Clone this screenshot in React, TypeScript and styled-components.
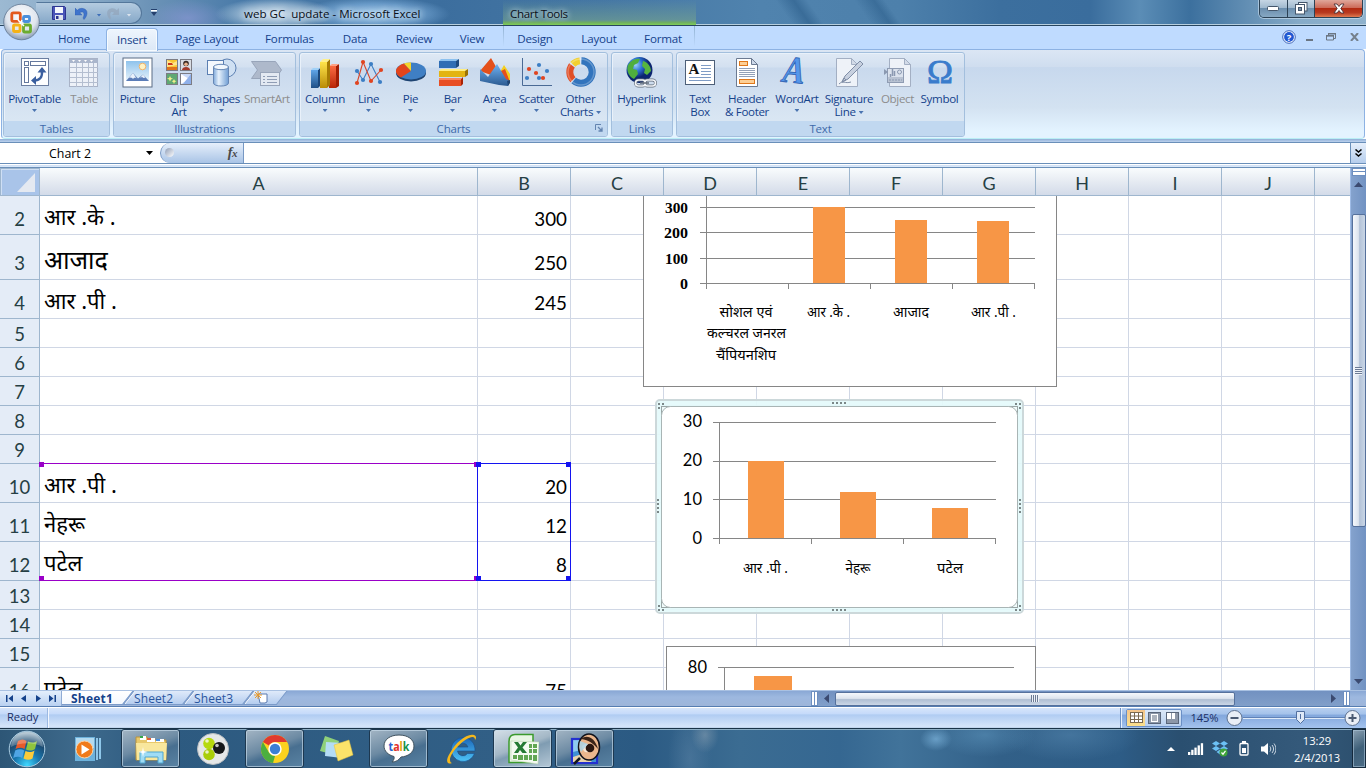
import React from "react";
import styled, { createGlobalStyle, css } from "styled-components";

const UI = `"Open Sans", "Noto Sans", sans-serif`;
const CELL = `Lato, "Noto Sans", sans-serif`;
const HINDI = `"Noto Sans Devanagari", "Noto Sans", "Lohit Devanagari", sans-serif`;

const Global = createGlobalStyle`
  * { box-sizing: border-box; }
  html, body { margin: 0; padding: 0; overflow: hidden; }
  body { font-family: ${UI}; font-size: 11.5px; }
  svg { display: block; flex: none; }
`;

const Screen = styled.div`
  width: 1366px;
  height: 768px;
  display: flex;
  flex-direction: column;
  position: relative;
  overflow: hidden;
  background: #fff;
`;

/* ---------- title bar ---------- */
const TitleBar = styled.header`
  height: 26px;
  flex: none;
  display: flex;
  align-items: flex-start;
  position: relative;
  border-bottom: 1px solid #27455f;
  box-shadow: inset 0 -1px 0 #b7cfdf;
  background:
    radial-gradient(ellipse 40px 18px at 188px 18px, rgba(135, 150, 210, .7) 0, rgba(110, 145, 195, 0) 100%),
    radial-gradient(ellipse 60px 16px at 275px 14px, rgba(215, 228, 240, .95) 0, rgba(180, 205, 225, .6) 60%, rgba(90, 140, 185, 0) 100%),
    radial-gradient(ellipse 75px 17px at 375px 14px, rgba(165, 205, 240, .95) 0, rgba(130, 180, 225, .6) 60%, rgba(90, 140, 185, 0) 100%),
    linear-gradient(55deg, transparent 57.3%, rgba(40, 90, 135, .55) 58.6%, transparent 59.6%, transparent 63%, rgba(40, 90, 135, .5) 64.4%, transparent 65.2%),
    linear-gradient(90deg, #9cb9d2 0, #86a8c6 90px, #6c93b7 150px, #4a7ba9 240px, #3c6e9e 440px, #4577a4 600px, #5083ae 760px, #4d80ab 900px, #3c6f9e 1000px, #3a6d9d 1090px, #5b8db6 1140px, #3c709e 1190px, #86abc8 1300px, #8fb2cd 1366px);
`;
const QuickAccess = styled.div`
  margin: 2px 0 0 36px;
  width: 106px;
  height: 22px;
  border: 1px solid #54779b;
  border-radius: 0 12px 12px 0;
  border-left-color: transparent;
  background: linear-gradient(#b4cbe0, #86a8c8);
  display: flex;
  align-items: center;
  padding-left: 15px;
`;
const QuickItem = styled.span<{ $w: number }>`
  width: ${(p) => p.$w}px;
  display: flex;
`;
const Customize = styled.div`
  margin: 9px 0 0 8px;
  width: 10px;
`;
const WindowTitle = styled.div`
  margin: 6px 0 0 84px;
  width: 259px;
  line-height: 16px;
  font-size: 11.6px;
  letter-spacing: -0.02px;
  color: #0a0f18;
  white-space: pre;
  text-shadow: 0 0 6px #e4f0fa, 0 0 8px #e4f0fa;
`;
const ChartTools = styled.div`
  width: 193px;
  height: 25px;
  padding: 6px 0 0 7px;
  line-height: 16px;
  font-size: 11.6px;
  letter-spacing: -0.35px;
  color: #0a0f18;
  text-shadow: 0 0 5px #cfe2e6, 0 0 7px #cfe2e6;
  background: linear-gradient(rgba(120, 170, 140, 0), rgba(120, 165, 140, .55) 80%, #6fae62 90%, #7fce55);
`;
const WindowButtons = styled.div`
  margin-left: auto;
  margin-right: 3px;
  height: 18px;
  display: flex;
  border: 1px solid #2c4255;
  border-top: 0;
  border-radius: 0 0 5px 5px;
  box-shadow: 0 0 0 1px rgba(215, 232, 245, .55);
  overflow: hidden;
`;
const WindowButton = styled.button<{ $w: number; $close?: boolean }>`
  width: ${(p) => p.$w}px;
  height: 17px;
  border: 0;
  border-right: ${(p) => (p.$close ? "0" : "1px solid #2c4255")};
  padding: 0;
  display: flex;
  align-items: center;
  justify-content: center;
  background: ${(p) =>
    p.$close
      ? "linear-gradient(#e0a79b 0, #cc6a58 46%, #b22a12 50%, #b83a20 75%, #e07a50)"
      : "linear-gradient(#c6d6e4 0, #a0b9ce 46%, #6c8fae 50%, #87a8c3)"};
`;
const OfficeOrb = styled.div`
  position: absolute;
  left: 3px;
  top: 3px;
  width: 37px;
  height: 38px;
  z-index: 3;
`;

/* ---------- ribbon ---------- */
const TabStrip = styled.nav`
  height: 23px;
  flex: none;
  display: flex;
  padding-left: 42px;
  background: #bfdbff;
  position: relative;
`;
const Tab = styled.div<{ $w: number; $active?: boolean; $context?: boolean }>`
  width: ${(p) => p.$w}px;
  height: 24px;
  line-height: 26px;
  text-align: center;
  color: #15428b;
  font-size: 11.6px;
  letter-spacing: -0.2px;
  ${(p) =>
    p.$active &&
    css`
      margin-top: 2px;
      height: 23px;
      line-height: 21px;
      border: 1px solid #8db2e3;
      border-bottom: 0;
      border-radius: 4px 4px 0 0;
      background: linear-gradient(#eef5fd, #dce8f6);
      box-shadow: inset 0 0 0 1px #f6fbff;
      position: relative;
      z-index: 2;
    `}
`;
const ContextTabs = styled.div`
  display: flex;
  height: 22px;
  width: 192px;
  border: solid transparent;
  border-width: 0 1px;
  border-image: linear-gradient(#8fb0d0, rgba(143, 176, 208, 0) 90%) 1;
`;
const TabTools = styled.div`
  margin-left: auto;
  height: 22px;
  width: 84px;
  display: flex;
  align-items: center;
`;
const ToolSlot = styled.span<{ $w: number }>`
  width: ${(p) => p.$w}px;
`;
const Ribbon = styled.section`
  height: 90px;
  flex: none;
  margin: 0 1px 0 1px;
  padding: 2px 0 0 1px;
  display: flex;
  gap: 3px;
  border: 1px solid #8db2e3;
  border-bottom-color: #b9eef5;
  border-radius: 4px;
  background: linear-gradient(#dbe6f4 0, #cfddef 19%, #c7d8ed 20%, #d3e2f1 65%, #e3f3ff 92%);
`;
const Group = styled.div<{ $w: number; $pad: number }>`
  width: ${(p) => p.$w}px;
  height: 85px;
  flex: none;
  border: 1px solid #a3bfdd;
  border-radius: 3px;
  box-shadow: inset 1px 1px 0 #e9f1fa;
  background: linear-gradient(#dfe9f5 0, #d3e0f0 17%, #c9d9ed 18%, #d9e6f3 80%);
  display: flex;
  flex-direction: column;
  overflow: hidden;
  --pad: ${(p) => p.$pad}px;
`;
const GroupBody = styled.div`
  height: 68px;
  padding: 4px 0 0 var(--pad);
  display: flex;
`;
const GroupLabel = styled.div`
  height: 15px;
  line-height: 15px;
  text-align: center;
  color: #3e6aaa;
  font-size: 11.5px;
  letter-spacing: -0.2px;
  background: #c1d8f0;
  position: relative;
`;
const Launcher = styled.span`
  position: absolute;
  right: 4px;
  top: 3px;
`;
const BigButton = styled.div<{ $w: number; $off?: boolean }>`
  width: ${(p) => p.$w}px;
  flex: none;
  display: flex;
  flex-direction: column;
  align-items: center;
  color: ${(p) => (p.$off ? "#8d8d8d" : "#15428b")};
`;
const BigLabel = styled.div`
  margin-top: 3px;
  font-size: 11.6px;
  letter-spacing: -0.35px;
  line-height: 13px;
  white-space: nowrap;
  text-align: center;
`;
const Caret = styled.i<{ $inline?: boolean; $color?: string }>`
  display: ${(p) => (p.$inline ? "inline-block" : "block")};
  vertical-align: 2px;
  margin: ${(p) => (p.$inline ? "0 0 0 3px" : "4px auto 0")};
  width: 5px;
  height: 3px;
  background: ${(p) => p.$color || "#4a74b0"};
  clip-path: polygon(0 0, 100% 0, 50% 100%);
`;
const RibbonEdge = styled.div`
  height: 3px;
  flex: none;
  background: linear-gradient(#8faed6, #bcd2ee);
`;

/* ---------- formula bar ---------- */
const FormulaBar = styled.div`
  height: 22px;
  flex: none;
  display: flex;
  border: solid #6a8fb9;
  border-width: 1px 0;
  background: #fff;
`;
const NameBox = styled.div`
  width: 160px;
  display: flex;
  align-items: center;
  padding-left: 49px;
  font-size: 12.4px;
  color: #000;
`;
const NameText = styled.span`
  width: 97px;
`;
const FxArea = styled.div`
  width: 84px;
  border: 1px solid #7798c4;
  border-width: 0 1px 0 1px;
  border-radius: 11px 0 0 11px;
  background: linear-gradient(#e6effb, #a9c4e6);
  display: flex;
  align-items: center;
  justify-content: space-between;
  padding: 0 6px 1px 4px;
`;
const Knob = styled.span`
  width: 9px;
  height: 9px;
  border-radius: 50%;
  background: linear-gradient(135deg, #8f9db6, #fff);
`;
const Fx = styled.span`
  font: italic bold 14px "Liberation Serif", serif;
  color: #4a4a4a;
  letter-spacing: -0.5px;
`;
const FxSmall = styled.span`
  font-size: 11px;
`;
const Expand = styled.div`
  margin-left: auto;
  width: 16px;
  border-left: 1px solid #6a8fb9;
  background: linear-gradient(#e6effb, #b5cdec);
  display: flex;
  align-items: center;
  justify-content: center;
`;
const FormulaGap = styled.div`
  height: 4px;
  flex: none;
  background: linear-gradient(#fff 0, #fff 1px, #cfe0f5 1px, #dce9f8 3px, #6a8fb9 3px);
`;

/* ---------- sheet ---------- */
const SheetArea = styled.main`
  height: 522px;
  flex: none;
  display: flex;
`;
const Sheet = styled.div`
  width: 1350px;
  position: relative;
  overflow: hidden;
  background: #fff;
`;
const HeaderRow = styled.div`
  height: 28px;
  display: flex;
  border-bottom: 1px solid #9eb6ce;
`;
const SelectAll = styled.div`
  width: 40px;
  flex: none;
  border: 1px solid #9eb6ce;
  border-bottom: 0;
  background: #a9c4e9;
  box-shadow: inset 1px 1px 0 #cfdff4;
  display: flex;
  justify-content: flex-end;
  padding: 4px 4px 0 0;
`;
const ColHead = styled.div<{ $w: number }>`
  width: ${(p) => p.$w}px;
  flex: none;
  border-right: 1px solid #9eb6ce;
  background: linear-gradient(#f9fcfd, #e6ebf2 50%, #d3dbe9);
  font: 18px/30px ${CELL};
  text-align: center;
  color: #263f44;
`;
const Row = styled.div<{ $h: number; $pb: number }>`
  height: ${(p) => p.$h}px;
  display: flex;
  --pb: ${(p) => p.$pb}px;
`;
const RowHead = styled.div`
  width: 40px;
  flex: none;
  border-right: 1px solid #9eb6ce;
  border-bottom: 1px solid #9eb6ce;
  background: #e4ecf7;
  display: flex;
  align-items: flex-end;
  justify-content: center;
  padding-bottom: var(--pb);
  font: 18.5px/20px ${CELL};
  color: #263f44;
`;
const Cell = styled.div<{ $w: number; $num?: boolean }>`
  width: ${(p) => p.$w}px;
  flex: none;
  border-right: 1px solid #d0d7e5;
  border-bottom: 1px solid #d0d7e5;
  display: flex;
  align-items: flex-end;
  justify-content: ${(p) => (p.$num ? "flex-end" : "flex-start")};
  padding: 0 3px var(--pb) 4px;
  font: 18.8px/20px ${CELL};
  color: #000;
`;
const HindiText = styled.span<{ $w: number; $size?: number }>`
  font-family: ${HINDI};
  font-size: ${(p) => p.$size || 22}px;
  width: ${(p) => p.$w}px;
  margin-bottom: ${(p) => (p.$size ? 0 : -1)}px;
  white-space: nowrap;
`;
const Range = styled.div<{ $x: number; $w: number; $c: string; $open?: boolean }>`
  position: absolute;
  left: ${(p) => p.$x}px;
  top: 295px;
  width: ${(p) => p.$w}px;
  height: 118px;
  border: 1px solid ${(p) => p.$c};
  ${(p) => p.$open && "border-left: 0; border-right: 0;"}
`;
const Handle = styled.i<{ $c: string; $pos: "tl" | "tr" | "bl" | "br" }>`
  position: absolute;
  width: 5px;
  height: 5px;
  background: ${(p) => p.$c};
  ${(p) => (p.$pos[0] === "t" ? "top: -2px;" : "bottom: -1px;")}
  ${(p) => (p.$pos[1] === "l" ? "left: -2px;" : "right: -1px;")}
`;
const ChartObject = styled.div<{ $x: number; $y: number }>`
  position: absolute;
  left: ${(p) => p.$x}px;
  top: ${(p) => p.$y}px;
`;
const GridWindow = styled.div`
  height: 494px;
  position: relative;
  overflow: hidden;
`;

/* ---------- scroll bars ---------- */
const VScroll = styled.div`
  width: 16px;
  display: flex;
  flex-direction: column;
  align-items: center;
  border-left: 1px solid #9ebbe6;
  background: linear-gradient(90deg, #84a2cd, #7192c2);
`;
const VSplit = styled.div`
  width: 14px;
  height: 8px;
  border: 1px solid #6d8fc0;
  background: linear-gradient(#fff 0, #fff 2px, #6d8fc0 2px, #6d8fc0 3px, #fff 3px);
`;
const Arrow = styled.i<{ $d: "up" | "down" | "left" | "right" }>`
  display: block;
  background: #3b4a70;
  width: ${(p) => (p.$d === "up" || p.$d === "down" ? 9 : 5)}px;
  height: ${(p) => (p.$d === "up" || p.$d === "down" ? 5 : 9)}px;
  clip-path: ${(p) =>
    ({
      up: "polygon(50% 0, 100% 100%, 0 100%)",
      down: "polygon(0 0, 100% 0, 50% 100%)",
      left: "polygon(100% 0, 100% 100%, 0 50%)",
      right: "polygon(0 0, 100% 50%, 0 100%)",
    })[p.$d]};
`;
const VArrowTop = styled.div`
  height: 11px;
  margin-bottom: 2px;
  display: flex;
  align-items: flex-end;
`;
const VArrowBottom = styled.div`
  height: 11px;
`;
const VThumb = styled.div`
  margin: 25px 0 auto;
  width: 14px;
  height: 313px;
  border: 1px solid #56719c;
  border-radius: 2px;
  background: linear-gradient(90deg, #f5f8fc, #dde4ee 45%, #b4c3d8 55%, #c9d6e6);
  display: flex;
  align-items: center;
  justify-content: center;
`;
const VGrip = styled.i`
  width: 7px;
  height: 8px;
  background: repeating-linear-gradient(#6b7a94 0, #6b7a94 1px, #eef2f8 1px, #eef2f8 2px);
`;
const BottomBar = styled.div`
  height: 17px;
  flex: none;
  display: flex;
  border-top: 1px solid #a9c1e2;
  border-bottom: 1px solid #567db1;
  background: linear-gradient(#8aa8d5, #9db8df 40%, #9db5da);
`;
const NavButtons = styled.div`
  width: 62px;
  display: flex;
  align-items: center;
  gap: 8px;
  padding-left: 6px;
  position: relative;
  z-index: 3;
  border-right: 1px solid #8fabd4;
  background: linear-gradient(#e4effc, #b9d1f1);
`;
const SheetTab = styled.div<{ $w: number; $active?: boolean }>`
  width: ${(p) => p.$w}px;
  height: 14px;
  position: relative;
  z-index: ${(p) => (p.$active ? 2 : 1)};
  padding-left: ${(p) => (p.$active ? 9 : 12)}px;
  font-size: 12px;
  font-weight: ${(p) => (p.$active ? 700 : 400)};
  letter-spacing: ${(p) => (p.$active ? 0.2 : 0.1)}px;
  line-height: 15px;
  color: ${(p) => (p.$active ? "#15428b" : "#2a56a0")};
  &::before {
    content: "";
    position: absolute;
    z-index: -1;
    inset: 0 -6px 0 ${(p) => (p.$active ? -14 : 6)}px;
    transform: skewX(-38deg);
    border: 1px solid #7b9bc9;
    border-top: 0;
    box-shadow: inset 1px 0 0 #fff;
    background: ${(p) => (p.$active ? "linear-gradient(#fff, #f3f8fe)" : "linear-gradient(#dfeafa, #b5cdef)")};
  }
`;
const HSplit = styled.div`
  width: 7px;
  height: 15px;
  border: 1px solid #6d8fc0;
  background: linear-gradient(90deg, #fff 2px, #6d8fc0 2px, #6d8fc0 3px, #fff 3px);
`;
const HTrack = styled.div`
  width: 525px;
  display: flex;
  align-items: center;
  padding: 0 7px 0 6px;
  background: linear-gradient(#7291c1, #819fc9);
`;
const HThumb = styled.div`
  margin: 0 auto 0 6px;
  width: 400px;
  height: 14px;
  border: 1px solid #56719c;
  border-radius: 2px;
  background: linear-gradient(#f5f8fc, #dde4ee 45%, #b0bfd3 55%, #cbd7e6);
  display: flex;
  align-items: center;
  justify-content: center;
`;
const HGrip = styled.i`
  width: 8px;
  height: 7px;
  background: repeating-linear-gradient(90deg, #6b7a94 0, #6b7a94 1px, #eef2f8 1px, #eef2f8 2px);
`;

/* ---------- status bar ---------- */
const StatusBar = styled.div`
  height: 21px;
  flex: none;
  display: flex;
  border-top: 1px solid #fff;
  background: linear-gradient(#d6e5fa 0, #c5dafa 30%, #b0ccf2 34%, #d5e5fa 92%, #b9cfe8);
`;
const Ready = styled.div`
  width: 48px;
  padding-left: 7px;
  font-size: 11.2px;
  letter-spacing: -0.1px;
  line-height: 18px;
  color: #1b2f66;
  border-right: 1px solid #9cb9e2;
  box-shadow: 1px 0 0 #f2f7fe;
`;
const ZoomArea = styled.div`
  margin-left: auto;
  width: 246px;
  border-left: 1px solid #6f93c8;
  box-shadow: inset 1px 0 0 #eaf2fc;
  background: linear-gradient(#b7cff0 0, #a4c2ea 30%, #82a7dc 36%, #a4c3ee);
  display: flex;
  align-items: center;
  padding: 0 0 1px 5px;
`;
const ViewGroup = styled.div`
  width: 57px;
  height: 18px;
  display: flex;
  border: 1px solid #6a8fc6;
  border-radius: 2px;
  background: linear-gradient(#dbe8f8, #b9d0ee);
`;
const ViewButton = styled.div<{ $on?: boolean }>`
  flex: 1;
  display: flex;
  align-items: center;
  justify-content: center;
  background: ${(p) => (p.$on ? "linear-gradient(#f3c58c, #fbe08c)" : "none")};
`;
const ZoomText = styled.span`
  width: 44px;
  padding-left: 8px;
  font-size: 11.2px;
  letter-spacing: -0.1px;
  color: #1b2f66;
`;

/* ---------- taskbar ---------- */
const Taskbar = styled.footer`
  height: 40px;
  flex: none;
  display: flex;
  align-items: flex-start;
  border-top: 1px solid #1a3348;
  box-shadow: inset 0 1px 0 #8fb0c6;
  position: relative;
  background:
    radial-gradient(ellipse 16px 12px at 936px 10px, rgba(120, 175, 215, .75), rgba(120, 175, 215, 0)),
    radial-gradient(ellipse 14px 18px at 705px 6px, rgba(130, 155, 175, .6), rgba(130, 155, 175, 0)),
    radial-gradient(ellipse 22px 50px at 690px 30px, rgba(90, 130, 165, .5), rgba(90, 130, 165, 0)),
    radial-gradient(ellipse 50px 22px at 985px 6px, rgba(90, 145, 185, .6), rgba(90, 145, 185, 0)),
    radial-gradient(ellipse 70px 26px at 1070px 6px, rgba(85, 135, 175, .55), rgba(85, 135, 175, 0)),
    linear-gradient(90deg, #2d5676 0, #3e6a8c 80px, #2d5a80 160px, #315f86 500px, #2b5a83 640px, #3b6c92 740px, #356791 840px, #41739a 900px, #326088 1000px, #2d5c86 1120px, #2a4f70 1180px, #34597a 1300px, #2c4f6d 1366px);
`;
const TaskButton = styled.div<{ $w: number; $open?: boolean; $bright?: boolean }>`
  width: ${(p) => p.$w}px;
  height: 39px;
  flex: none;
  display: flex;
  align-items: center;
  justify-content: center;
  ${(p) =>
    p.$open &&
    css`
      border: 1px solid #1d3850;
      border-radius: 3px;
      box-shadow: inset 0 0 0 1px rgba(200, 220, 235, .65);
      background: ${p.$bright
        ? "linear-gradient(160deg, #d5e0e8 0, #a3b7c6 45%, #7f9cb2 55%, #b5c8d6)"
        : "linear-gradient(160deg, #a3b5c4 0, #6c8aa3 45%, #486f90 60%, #5a83a3)"};
    `}
`;
const Spacer = styled.div<{ $w: number }>`
  width: ${(p) => p.$w}px;
  flex: none;
`;
const Tray = styled.div`
  margin-left: auto;
  height: 39px;
  display: flex;
  align-items: center;
`;
const TraySlot = styled.div<{ $w: number }>`
  width: ${(p) => p.$w}px;
  display: flex;
  justify-content: center;
`;
const Clock = styled.div`
  width: 66px;
  text-align: center;
  color: #fff;
  font-size: 11.2px;
  letter-spacing: -0.05px;
  line-height: 17px;
`;
const ShowDesktop = styled.div`
  width: 14px;
  height: 39px;
  margin-left: 2px;
  border: 1px solid #14293c;
  box-shadow: inset 0 0 0 1px rgba(170, 195, 215, .6);
  background: linear-gradient(150deg, #8ba1b3, #3f6079 50%, #4a6b85);
`;

/* ---------- ribbon icons ---------- */
const IconFrame = styled.svg`
  overflow: visible;
`;
const I = ({ children }: { children: React.ReactNode }) => (
  <IconFrame width="32" height="32" viewBox="0 0 32 32">
    {children}
  </IconFrame>
);

const PivotIcon = () => (
  <I>
    <rect x="2.500" y="1.500" width="27" height="27" fill="#fdfeff" stroke="#6b7ea0" />
    <g fill="#fff" stroke="#64789d">
      <rect x="5.500" y="4.500" width="4" height="4" />
      <rect x="11.500" y="4.500" width="15" height="4" />
      <rect x="5.500" y="10.500" width="4" height="15" />
    </g>
    <path d="M15 23.500 C21 23.500 23.500 20 23 14" fill="none" stroke="#3a5f9f" strokeWidth="2.400" />
    <path d="M12 23.500 l5 -4.500 v9z M23 10 l-4.500 5.500 h9z" fill="#3a5f9f" />
  </I>
);
const TableIcon = () => (
  <I>
    <rect x="1.500" y="1.500" width="28" height="28" fill="#edf1f8" stroke="#a9b3c7" />
    <rect x="2" y="2" width="28" height="4" fill="#aab6cc" />
    <path d="M8.500 6v24M14.500 6v24M20.500 6v24M25.500 6v24M2 10.500h28M2 15.500h28M2 20.500h28M2 25.500h28" stroke="#b4bed0" fill="none" />
    <path d="M4 3h3l-1.500 2zM10 3h3l-1.500 2zM16 3h3l-1.500 2zM22 3h3l-1.500 2z" fill="#fff" />
  </I>
);
const PictureIcon = () => (
  <I>
    <defs>
      <linearGradient id="sky" x1="0" y1="0" x2="0" y2="1">
        <stop offset="0" stopColor="#8fc3ec" />
        <stop offset="1" stopColor="#e8f3fb" />
      </linearGradient>
    </defs>
    <rect x="1" y="1" width="29" height="29" fill="#fff" stroke="#5b6d85" />
    <rect x="4" y="4" width="23" height="20" fill="url(#sky)" />
    <circle cx="20.500" cy="9.500" r="3.300" fill="#fff3c4" stroke="#f2b56b" />
    <path d="M4 24l7-8 5 5.500 5-4 6 6.500z" fill="#5b7db8" />
    <path d="M11 16l-4 5 2-.6 2 1.400 2-1.200 1.500.6zM21 17.500l-3 3.400 2-.8 1.500 1 2-.6z" fill="#e9f1fb" />
  </I>
);
const ClipIcon = () => (
  <I>
    <g stroke="#7c7c84" strokeWidth="1">
      <rect x="3.500" y="2.500" width="11" height="11" fill="#f8c630" />
      <rect x="17.500" y="2.500" width="11" height="11" fill="#d9dde4" />
      <rect x="3.500" y="16.500" width="11" height="11" fill="#5fa873" />
      <rect x="17.500" y="16.500" width="11" height="11" fill="#c9d9f7" />
    </g>
    <path d="M4 3l6 3 4-2v4l-10 2z" fill="#ffe48a" />
    <path d="M4 10h10v3H4z" fill="#e0731d" />
    <path d="M5 6h4l1 2H5z" fill="#c9361c" />
    <circle cx="23" cy="6.500" r="2.800" fill="#3a2a25" />
    <circle cx="23" cy="7.300" r="1.800" fill="#eab48d" />
    <path d="M19 13c0-4 8-4 8 0z" fill="#a33a2c" />
    <path d="M7 19l1 2 2 .6-2 1-1 2-1-2-2-1 2-.6zM11 22l.8 1.600 1.600.6-1.600.8L11 27l-.8-2-1.600-.8 1.600-.6z" fill="#eef08a" />
    <path d="M18 17l8 5-8 5z" fill="#fff" />
    <path d="M28 17v10l-8 0z" fill="#8fb0ea" />
  </I>
);
const ShapesIcon = () => (
  <I>
    <defs>
      <linearGradient id="cyl" x1="0" x2="1">
        <stop offset="0" stopColor="#7fa9da" />
        <stop offset=".35" stopColor="#e6f1fc" />
        <stop offset="1" stopColor="#6f9dd3" />
      </linearGradient>
    </defs>
    <circle cx="21" cy="11" r="9" fill="#cfe0f3" stroke="#5b7fb2" />
    <rect x="1.500" y="3.500" width="16" height="14" fill="#f4f8fd" stroke="#5b7fb2" />
    <path d="M7.500 10v16c0 4 15 4 15 0V10z" fill="url(#cyl)" stroke="#6687b5" />
    <ellipse cx="15" cy="10" rx="7.500" ry="2.700" fill="#f1f7fd" stroke="#6687b5" />
  </I>
);
const SmartArtIcon = () => (
  <I>
    <path d="M0.500 4.500h24l6 8.500-6 8.500H.5l6-8.500z" fill="#aeb9cb" stroke="#98a5ba" />
    <rect x="9.500" y="15.500" width="19" height="13" fill="#e3e9f2" stroke="#98a5ba" />
    <path d="M16 19.500h10M16 22.500h10M16 25.500h10M12 19.500h2M12 22.500h2M12 25.500h2" stroke="#8f9db5" />
  </I>
);
const ColumnIcon = () => (
  <I>
    <defs>
      <linearGradient id="cb" x1="0" y1="0" x2="0" y2="1"><stop offset="0" stopColor="#5fa5e8" /><stop offset="1" stopColor="#1f4f86" /></linearGradient>
      <linearGradient id="cy" x1="0" y1="0" x2="0" y2="1"><stop offset="0" stopColor="#ffe44a" /><stop offset="1" stopColor="#b98b06" /></linearGradient>
      <linearGradient id="cr" x1="0" y1="0" x2="0" y2="1"><stop offset="0" stopColor="#fb6b42" /><stop offset="1" stopColor="#b72407" /></linearGradient>
    </defs>
    <path d="M2 13h7v18H2z" fill="url(#cb)" />
    <path d="M9 13l2-2v18l-2 2z" fill="#1b477b" />
    <path d="M2 13l2-2h7l-2 2z" fill="#9fd0f7" />
    <path d="M20 9h7v22h-7z" fill="url(#cr)" />
    <path d="M27 9l3-2v22l-3 2z" fill="#a11d04" />
    <path d="M20 9l3-2h7l-3 2z" fill="#ffa184" />
    <path d="M11 5h7v26h-7z" fill="url(#cy)" />
    <path d="M18 5l3-3v26l-3 3z" fill="#a77c03" />
    <path d="M11 5l3-3h7l-3 3z" fill="#fff08a" />
  </I>
);
const dots = (pts: number[][], c: string, r = 2.1) => pts.map((p, i) => <circle key={i} cx={p[0]} cy={p[1]} r={r} fill={c} />);
const LineIcon = () => (
  <I>
    <path d="M4 14l6 9 8-16 9 18" fill="none" stroke="#3c7ec4" strokeWidth="1.100" />
    <path d="M4 26l6-21 8 19 10-11" fill="none" stroke="#d9482b" strokeWidth="1.100" />
    {dots([[4, 14], [10, 23], [18, 7], [27, 25]], "#3c7ec4")}
    {dots([[4, 26], [10, 5], [18, 24], [28, 13]], "#e04420")}
  </I>
);
const PieIcon = () => (
  <I>
    <ellipse cx="16" cy="16" rx="15" ry="8.500" fill="#1e4472" />
    <ellipse cx="16" cy="14" rx="15" ry="8.500" fill="#3f7fc4" />
    <path d="M16 14L6 20.500C1 18-.5 13.500 2.500 10.500 4.500 8 7 7 9 6.500z" fill="#e2441c" />
    <path d="M16 14L9 6.500c2-.8 4-1 7-1z" fill="#f6d52c" />
  </I>
);
const BarIcon = () => (
  <I>
    <path d="M2 4h17v7H2z" fill="#2f6db4" /><path d="M2 4l2-2h18l-3 2z" fill="#8dc1ef" /><path d="M19 4l3-2v7l-3 2z" fill="#1d4a80" />
    <path d="M2 22h22v7H2z" fill="#e84e24" /><path d="M24 22l2-2v7l-2 2z" fill="#a82306" /><path d="M2 21h22v2H2z" fill="#fb8560" />
    <path d="M2 14h26v6H2z" fill="#e3b412" /><path d="M2 14l2-2h27l-3 2z" fill="#ffee83" /><path d="M28 14l3-2v6l-3 2z" fill="#9b7204" />
  </I>
);
const AreaIcon = () => (
  <I>
    <defs><linearGradient id="ab" x1="0" y1="0" x2="0" y2="1"><stop offset="0" stopColor="#6fb2f3" /><stop offset="1" stopColor="#2a5990" /></linearGradient></defs>
    <path d="M21 15l4-7 6 9v10z" fill="#f3cf1f" />
    <path d="M1 14l11-13 8 14 6-3 5 13z" fill="#e4501b" />
    <path d="M1 12l8 8 9-13 9 15 4 2-2 5-9-1-19-4z" fill="url(#ab)" />
    <path d="M28 24l3-1v3l-2 3z" fill="#1e4474" />
  </I>
);
const ScatterIcon = () => (
  <I>
    <path d="M1.500 1v27.500H31" fill="none" stroke="#4a6a95" />
    {dots([[18, 8], [26, 14], [6, 21], [18, 21]], "#3c7ec4")}
    {dots([[8, 12], [15, 16], [22, 21]], "#e04420")}
  </I>
);
const DonutIcon = () => (
  <I>
    <g fill="none" strokeWidth="7">
      <circle cx="16" cy="15" r="11.200" stroke="#3274bd" strokeDasharray="42.500 30" transform="rotate(-88 16 15)" />
      <circle cx="16" cy="15" r="11.200" stroke="#e04f27" strokeDasharray="15.500 80" transform="rotate(136 16 15)" />
      <circle cx="16" cy="15" r="11.200" stroke="#f2cf2d" strokeDasharray="8 80" transform="rotate(223 16 15)" />
    </g>
    <circle cx="16" cy="15" r="13" fill="none" stroke="#fff" strokeOpacity=".25" strokeWidth="1.500" />
  </I>
);
const GlobeIcon = () => (
  <I>
    <defs><radialGradient id="gl" cx=".35" cy=".3"><stop offset="0" stopColor="#9ed2fb" /><stop offset=".5" stopColor="#2f74d6" /><stop offset="1" stopColor="#0c2670" /></radialGradient></defs>
    <circle cx="13.500" cy="13" r="13" fill="url(#gl)" />
    <path d="M2 8c3-5 8-7 12-6l-2 4-4 2-1 4 4 1 1 4-4 5C3 20 0 13 2 8z" fill="#4fae3e" />
    <path d="M17 4c4 1 8 5 8 10l-4 4-3-2 1-4-3-3z" fill="#57b53f" />
    <g fill="none">
      <path d="M9.500 26a3 3 0 0 1 3-3h4a3 3 0 0 1 0 6h-4a3 3 0 0 1-3-3zM18.500 26a3 3 0 0 1 3-3h5a3 3 0 0 1 0 6h-5a3 3 0 0 1-3-3z" stroke="#5f6a78" strokeWidth="3" />
      <path d="M9.500 26a3 3 0 0 1 3-3h4a3 3 0 0 1 0 6h-4a3 3 0 0 1-3-3zM18.500 26a3 3 0 0 1 3-3h5a3 3 0 0 1 0 6h-5a3 3 0 0 1-3-3z" stroke="#f1f4f8" strokeWidth="1.700" />
      <path d="M14 26h9" stroke="#5f6a78" strokeWidth="1.400" />
    </g>
  </I>
);
const TextBoxIcon = () => (
  <I>
    <rect x="1.500" y="3.500" width="29" height="24" fill="#fff" stroke="#4d5f78" />
    <text x="4.500" y="17" fontFamily="Liberation Serif" fontWeight="700" fontSize="15" fill="#111">A</text>
    <path d="M17 8.500h10M17 11.500h10M17 14.500h10M17 17.500h10M5 20.500h22M5 23.500h22" stroke="#7f9cc5" />
  </I>
);
const HeaderIcon = () => (
  <I>
    <path d="M5.500 1.500h15l6 6v22h-21z" fill="#fff" stroke="#6c7a91" />
    <path d="M20.500 1.500v6h6z" fill="#cdd8e8" stroke="#6c7a91" />
    <g fill="#fdcf96" stroke="#e0781a"><rect x="8.500" y="4.500" width="8" height="4" /><rect x="8.500" y="22.500" width="15" height="4" /></g>
    <path d="M8 11.500h16M8 13.500h16M8 15.500h16M8 17.500h16M8 19.500h16" stroke="#7789a6" strokeWidth=".8" />
  </I>
);
const WordArtIcon = () => (
  <I>
    <text x="2" y="26" fontFamily="Liberation Serif" fontStyle="italic" fontWeight="700" fontSize="38" fill="#5596ea" stroke="#2a5cae" strokeWidth=".8" transform="rotate(6 16 16)" textLength="22" lengthAdjust="spacingAndGlyphs">A</text>
  </I>
);
const SignatureIcon = () => (
  <I>
    <path d="M3.500 1.500h15l6 6v22h-21z" fill="#eef2f8" stroke="#a3afc3" />
    <path d="M18.500 1.500v6h6z" fill="#d3dbe8" stroke="#a3afc3" />
    <path d="M9 25l3-6L27 4l3 3-15 15z" fill="#c7d0df" stroke="#7f8da6" />
    <path d="M9 25l2-4 2 2zM6 27c4-4 6 0 12-2" fill="none" stroke="#7f8da6" />
  </I>
);
const ObjectIcon = () => (
  <I>
    <path d="M7.500 1.500h15l6 6v22h-21z" fill="#eef2f8" stroke="#a3afc3" />
    <path d="M22.500 1.500v6h6z" fill="#d3dbe8" stroke="#a3afc3" />
    <rect x="5.500" y="11.500" width="16" height="14" fill="#dbe2ed" stroke="#8f9cb3" />
    <path d="M6 20h15v5H6z" fill="#b8c2d2" />
    <path d="M7 23h13" stroke="#8b99b1" strokeDasharray="2 1" />
    <path d="M10.500 12v7M12.500 14v5M8.500 17v3" stroke="#8b99b1" strokeWidth="1.500" />
    <circle cx="17.500" cy="15" r="2" fill="none" stroke="#8b99b1" />
    <path d="M2 12l4 3-4 3z" fill="#8b99b1" />
  </I>
);
const SymbolIcon = () => (
  <I>
    <text x="3" y="26" fontFamily="Liberation Serif" fontSize="33" fill="#3a7ccc" stroke="#3a7ccc" strokeWidth=".8" textLength="26" lengthAdjust="spacingAndGlyphs">Ω</text>
  </I>
);

/* ---------- ribbon content ---------- */
type Btn = { w: number; icon: React.FC; lines: string[]; caret?: boolean; off?: boolean };
type Grp = { name: string; w: number; pad: number; launcher?: boolean; items: Btn[] };

const groups: Grp[] = [
  { name: "Tables", w: 107, pad: 1, items: [
    { w: 59, icon: PivotIcon, lines: ["PivotTable"], caret: true },
    { w: 40, icon: TableIcon, lines: ["Table"], off: true },
  ] },
  { name: "Illustrations", w: 183, pad: 4, items: [
    { w: 39, icon: PictureIcon, lines: ["Picture"] },
    { w: 44, icon: ClipIcon, lines: ["Clip", "Art"] },
    { w: 41, icon: ShapesIcon, lines: ["Shapes"], caret: true },
    { w: 50, icon: SmartArtIcon, lines: ["SmartArt"], off: true },
  ] },
  { name: "Charts", w: 309, pad: 2, launcher: true, items: [
    { w: 46, icon: ColumnIcon, lines: ["Column"], caret: true },
    { w: 41, icon: LineIcon, lines: ["Line"], caret: true },
    { w: 43, icon: PieIcon, lines: ["Pie"], caret: true },
    { w: 41, icon: BarIcon, lines: ["Bar"], caret: true },
    { w: 43, icon: AreaIcon, lines: ["Area"], caret: true },
    { w: 41, icon: ScatterIcon, lines: ["Scatter"], caret: true },
    { w: 47, icon: DonutIcon, lines: ["Other", "Charts"], caret: true },
  ] },
  { name: "Links", w: 62, pad: 2, items: [{ w: 55, icon: GlobeIcon, lines: ["Hyperlink"] }] },
  { name: "Text", w: 289, pad: 3, items: [
    { w: 40, icon: TextBoxIcon, lines: ["Text", "Box"] },
    { w: 54, icon: HeaderIcon, lines: ["Header", "& Footer"] },
    { w: 46, icon: WordArtIcon, lines: ["WordArt"], caret: true },
    { w: 58, icon: SignatureIcon, lines: ["Signature", "Line"], caret: true },
    { w: 39, icon: ObjectIcon, lines: ["Object"], off: true },
    { w: 45, icon: SymbolIcon, lines: ["Symbol"] },
  ] },
];

const RibbonButton = ({ b }: { b: Btn }) => (
  <BigButton $w={b.w} $off={b.off}>
    <b.icon />
    <BigLabel>
      <div>{b.lines[0]}</div>
      {b.lines[1] && (
        <div>
          {b.lines[1]}
          {b.caret && <Caret $inline />}
        </div>
      )}
      {b.caret && !b.lines[1] && <Caret />}
    </BigLabel>
  </BigButton>
);

/* ---------- charts ---------- */
const ORANGE = "#f79646";
const AXIS = "#868686";

type PlotProps = { ax: number; right: number; ys: number[]; ticks?: number[]; tick: number; bars: number[][]; top: number };
const Plot = ({ ax, right, ys, ticks = [], tick, bars, top }: PlotProps) => {
  const base = ys[ys.length - 1];
  return (
    <g shapeRendering="crispEdges">
      {ys.map((y) => <rect key={y} x={ax - 6} y={y} width={right - ax + 6} height="1" fill={AXIS} />)}
      {bars.map((b) => <rect key={b[0]} x={b[0]} y={b[1]} width={b[2]} height={base - b[1]} fill={ORANGE} />)}
      <rect x={ax} y={top} width="1" height={base - top} fill={AXIS} />
      {ticks.map((x) => <rect key={x} x={x} y={base} width="1" height={tick} fill={AXIS} />)}
    </g>
  );
};

const TopChart = () => (
  <ChartObject $x={643} $y={0}>
    <svg width="414" height="191">
      <rect x=".5" y="-9.500" width="413" height="200" fill="#fff" stroke={AXIS} />
      <Plot ax={63} right={392} ys={[11, 36, 62, 87]} ticks={[63, 145, 227, 309, 391]} tick={6} top={0} bars={[[170, 11, 32], [252, 24, 32], [334, 25, 32]]} />
      <g fontFamily="Liberation Serif" fontWeight="700" fontSize="14">
        <text x="22" y="17" textLength="23" lengthAdjust="spacingAndGlyphs">300</text>
        <text x="21" y="42" textLength="24" lengthAdjust="spacingAndGlyphs">200</text>
        <text x="22" y="68" textLength="23" lengthAdjust="spacingAndGlyphs">100</text>
        <text x="37" y="93" textLength="8" lengthAdjust="spacingAndGlyphs">0</text>
      </g>
      <g fontFamily={HINDI} fontSize="14" textAnchor="middle">
        <text x="103" y="121" textLength="53" lengthAdjust="spacingAndGlyphs">सोशल एवं</text>
        <text x="103.500" y="142" textLength="79" lengthAdjust="spacingAndGlyphs">कल्चरल जनरल</text>
        <text x="103" y="164" textLength="60" lengthAdjust="spacingAndGlyphs">चैंपियनशिप</text>
        <text x="185.500" y="121" textLength="43" lengthAdjust="spacingAndGlyphs">आर .के .</text>
        <text x="268" y="121" textLength="36" lengthAdjust="spacingAndGlyphs">आजाद</text>
        <text x="350.500" y="121" textLength="45" lengthAdjust="spacingAndGlyphs">आर .पी .</text>
      </g>
    </svg>
  </ChartObject>
);

const Grip = ({ x, y, v }: { x: number; y: number; v?: boolean }) => (
  <g fill="#7b8788">
    {[0, 1, 2, 3].map((i) => <rect key={i} x={v ? x : x + i * 4} y={v ? y + i * 4 : y} width="2" height="2" />)}
  </g>
);
const SelectedChart = () => (
  <ChartObject $x={655} $y={203}>
    <svg width="369" height="215">
      <rect x="1" y="1" width="367" height="213" rx="4" fill="#e4fafb" fillOpacity=".92" stroke="#ccd8da" strokeWidth="2" />
      <rect x="6.500" y="7.500" width="356" height="201" fill="#f0fbfb" stroke="#9aa5a5" />
      <rect x="6.500" y="7.500" width="356" height="201" rx="9" fill="#fff" stroke="#a9b5b5" />
      <Grip x={177} y={3} /><Grip x={177} y={210} />
      <Grip x={2} y={100} v /><Grip x={364} y={100} v />
      <g fill="#7b8788">
        {[[3, 4], [7, 4], [3, 8], [360, 4], [364, 4], [364, 8], [3, 206], [3, 210], [7, 210], [364, 206], [364, 210], [360, 210]].map((p) => (
          <rect key={p.join()} x={p[0]} y={p[1]} width="2" height="2" />
        ))}
      </g>
      <Plot ax={64} right={341} ys={[23, 62, 100, 139]} ticks={[64, 156, 248, 340]} tick={6} top={23} bars={[[93, 62, 36], [185, 93, 36], [277, 109, 36]]} />
      <g fontFamily="Lato" fontSize="16.500" textAnchor="end">
        <text x="47" y="28">30</text><text x="47" y="67">20</text><text x="47" y="106">10</text><text x="47" y="145">0</text>
      </g>
      <g fontFamily={HINDI} fontSize="14" textAnchor="middle">
        <text x="110.500" y="174" textLength="45" lengthAdjust="spacingAndGlyphs">आर .पी .</text>
        <text x="203" y="174" textLength="25" lengthAdjust="spacingAndGlyphs">नेहरू</text>
        <text x="295" y="174" textLength="26" lengthAdjust="spacingAndGlyphs">पटेल</text>
      </g>
    </svg>
  </ChartObject>
);
const BottomChart = () => (
  <ChartObject $x={666} $y={450}>
    <svg width="370" height="60">
      <rect x=".5" y=".5" width="369" height="90" fill="#fff" stroke={AXIS} />
      <g shapeRendering="crispEdges">
        <rect x="52" y="21" width="296" height="1" fill={AXIS} />
        <rect x="58" y="21" width="1" height="40" fill={AXIS} />
        <rect x="88" y="30" width="38" height="30" fill={ORANGE} />
      </g>
      <text x="41" y="27" textAnchor="end" fontFamily="Lato" fontSize="16.500">80</text>
    </svg>
  </ChartObject>
);

/* ---------- grid data ---------- */
const columns: [string, number][] = [
  ["A", 438], ["B", 93], ["C", 93], ["D", 93], ["E", 93], ["F", 93], ["G", 93], ["H", 93], ["I", 93], ["J", 93], ["", 36],
];
type RowData = { n: number; h: number; a?: string; aw?: number; size?: number; b?: string };
const rows: RowData[] = [
  { n: 2, h: 39, a: "आर .के .", aw: 72, b: "300" },
  { n: 3, h: 45, a: "आजाद", aw: 67, size: 25, b: "250" },
  { n: 4, h: 39, a: "आर .पी .", aw: 72, b: "245" },
  { n: 5, h: 29 }, { n: 6, h: 29 }, { n: 7, h: 29 }, { n: 8, h: 29 }, { n: 9, h: 29 },
  { n: 10, h: 39, a: "आर .पी .", aw: 72, b: "20" },
  { n: 11, h: 39, a: "नेहरू", aw: 40, b: "12" },
  { n: 12, h: 39, a: "पटेल", aw: 40, b: "8" },
  { n: 13, h: 29 }, { n: 14, h: 29 }, { n: 15, h: 29 },
  { n: 16, h: 39, a: "पटेल", aw: 40, b: "75" },
];
const rowPad = (h: number) => (h > 40 ? 6 : h > 30 ? 5 : 3);
const corners = ["tl", "tr", "bl", "br"] as const;

/* ---------- taskbar icons ---------- */
const StartOrb = () => (
  <svg width="38" height="38" viewBox="0 0 38 38">
    <defs><radialGradient id="orb" cx=".5" cy=".95" r=".9"><stop offset="0" stopColor="#3fd8ff" /><stop offset=".4" stopColor="#1878b0" /><stop offset=".75" stopColor="#1c4a70" /><stop offset="1" stopColor="#a0b8c8" /></radialGradient></defs>
    <circle cx="19" cy="19" r="17.800" fill="url(#orb)" stroke="#a9cbe0" strokeWidth="1" />
    <path d="M10 11c3-2 6-2 8.500 0l-2 8c-3-2-6-1.500-9 0z" fill="#e85a2a" />
    <path d="M20 11.500c3 1.500 6 1.500 9-.5l-2 8c-3 2-6 2-9 .5z" fill="#8fc43e" />
    <path d="M7.200 20.500c3-1.500 6-2 9 0l-2 7.500c-3-2-6-1.500-9 0z" fill="#4fa5e4" />
    <path d="M17.500 21c3 1.500 6 1.500 9-.5l-2 8c-3 2-6 1.500-9 0z" fill="#fbcb3a" />
    <path d="M3 17C4 7 11 2 19 2s15 5 16 15C26 12 12 12 3 17z" fill="#fff" opacity=".25" />
  </svg>
);
const PlayerIcon = () => (
  <svg width="28" height="28" viewBox="0 0 28 28">
    <path d="M1 2h20v24H1z" fill="#6db2dc" /><path d="M22 3h2v22h-2zM25 3h2v21h-2z" fill="#8fc7ea" />
    <path d="M2 3h18v10H2z" fill="#b4daef" />
    <circle cx="10.500" cy="14.500" r="8.500" fill="#f07a1a" stroke="#fbd6ad" /><path d="M7.500 9.500l8 5-8 5z" fill="#fff" />
  </svg>
);
const ExplorerIcon = () => (
  <svg width="34" height="30" viewBox="0 0 34 30">
    <path d="M2 3h11l2 3h17v20H2z" fill="#e8c96c" stroke="#b8933c" />
    <path d="M6 2h6v4H6z" fill="#fff" /><path d="M6 2h3v2H6z" fill="#35a84a" />
    <path d="M13 4h8v4h-8z" fill="#fff" /><path d="M13 4h4v2h-4z" fill="#e05a3a" />
    <path d="M22 5h8v3h-8z" fill="#fff" /><path d="M22 5h4v2h-4z" fill="#4a8fe0" />
    <path d="M2 9h31l-1 17H3z" fill="#f8e79d" />
    <path d="M6 18h23v11h-5v-6H11v6H6z" fill="#9fdcf5" stroke="#4fa6d0" />
    <path d="M9 13l.8 4 4 1-4 1-.8 4-.8-4-4-1 4-1z" fill="#fff" />
  </svg>
);
const BallsIcon = () => (
  <svg width="32" height="32" viewBox="0 0 32 32">
    <circle cx="16" cy="16" r="15.500" fill="#e5e7e8" stroke="#b9bdc0" />
    <circle cx="12" cy="10.500" r="5.800" fill="#b6d90e" /><circle cx="12" cy="21.500" r="5.800" fill="#a9cd08" /><circle cx="22" cy="15" r="6" fill="#15171a" />
    <g fill="#fff" opacity=".75"><circle cx="10" cy="8" r="1.800" /><circle cx="10" cy="19" r="1.800" /><circle cx="20" cy="12.500" r="1.800" /></g>
  </svg>
);
const ChromeIcon = () => (
  <svg width="30" height="30" viewBox="0 0 30 30">
    <circle cx="15" cy="15" r="14" fill="#fbd21f" />
    <path d="M15 1a14 14 0 0 1 12.100 7H15a7 7 0 0 0-6.100 3.500L2.900 8A14 14 0 0 1 15 1z" fill="#e03a2e" />
    <path d="M2.900 8l6 10.500A7 7 0 0 0 15 22l-2 7A14 14 0 0 1 2.900 8z" fill="#4caf3f" />
    <circle cx="15" cy="15" r="6.700" fill="#fff" /><circle cx="15" cy="15" r="5.200" fill="#3b7fd4" />
  </svg>
);
const NotesIcon = () => (
  <svg width="36" height="28" viewBox="0 0 36 28">
    <path d="M6 1l14 5-4 14-15-4z" fill="#8fd07a" /><path d="M7 7l17 1-1 15-17-2z" fill="#b4dcf5" /><path d="M15 10l15-5 4 15-15 6z" fill="#fbe36a" stroke="#e0c03e" strokeWidth=".5" />
  </svg>
);
const TalkIcon = () => (
  <svg width="32" height="30" viewBox="0 0 32 30">
    <path d="M16 1c9 0 15 4.500 15 11S25 22.500 18 23c-2 3-5 5-9 5 2-2 2.500-4 2-5.500C5 21 1 17 1 12 1 5.500 7 1 16 1z" fill="#fff" stroke="#40525f" />
    <text x="5.500" y="16.500" fontFamily="Open Sans" fontWeight="700" fontSize="12.500" textLength="21" lengthAdjust="spacingAndGlyphs">
      <tspan fill="#2a62d0">t</tspan><tspan fill="#e0322a">a</tspan><tspan fill="#e8a20a">l</tspan><tspan fill="#16924a">k</tspan>
    </text>
  </svg>
);
const IEIcon = () => (
  <svg width="32" height="32" viewBox="0 0 32 32">
    <defs><linearGradient id="ie" x1="0" y1="0" x2="0" y2="1"><stop offset="0" stopColor="#1c66b8" /><stop offset="1" stopColor="#4ec4f7" /></linearGradient></defs>
    <path d="M18 4.500a12 12 0 1 0 11.500 16h-7a5.500 5.500 0 0 1-10-2.500H30C30.500 10 25 4.500 18 4.500zM12.500 14a5.500 5.500 0 0 1 10.500 0z" fill="url(#ie)" stroke="#17508f" strokeWidth=".6" fillRule="evenodd" />
    <path d="M7 30c-5 2-7-2-2-10C11 9 22 0 29 2c3 1 2 4 1 5 0-3-2-4-6-2C15 9 5 21 5 27c0 2 1 3 2 3z" fill="#f5b81c" />
  </svg>
);
const ExcelIcon = () => (
  <svg width="32" height="32" viewBox="0 0 32 32">
    <path d="M8 1.500h18v28H2v-21c0-4 2-7 6-7z" fill="#e9f6e4" stroke="#3b9a2c" strokeWidth="1.500" />
    <path d="M4 8l28 1-1 22-27-4z" fill="#f4faf1" stroke="#b8d3ae" strokeWidth=".6" />
    <path d="M22 11h3v4h-3zM26 11h4v4h-4zM22 16h3v4h-3zM26 16h4v4h-4zM6 22h4v4H6zM11 22h5v5h-5zM17 22h4v5h-4zM22 22h3v5h-3zM26 22h4v6h-4z" fill="#62a653" />
    <path d="M7 9h4l2.500 3.500L16 9h4l-4.500 5.500L20 20h-4.500L13 17l-2 3H7l4-5.500z" fill="#257a34" />
  </svg>
);
const EyeIcon = () => (
  <svg width="32" height="32" viewBox="0 0 32 32">
    <rect x="3" y="6" width="25" height="24" fill="#8ecbf0" stroke="#2430d0" strokeWidth="2.200" />
    <path d="M4 19l12-3 11 4v9H4z" fill="#3f8fd4" /><path d="M4 24l9-3 10 8H4z" fill="#e7d3ae" />
    <path d="M11 25l-6 6" stroke="#14181f" strokeWidth="2.500" />
    <ellipse cx="20" cy="14" rx="10.500" ry="13" fill="#ebb78d" stroke="#10131c" strokeWidth="1.500" />
    <path d="M13 13c4-4 8-3 9 4-4 4-8 3-9-4z" fill="#f8e6d4" /><circle cx="21" cy="15" r="4.300" fill="#2a1710" />
    <path d="M12 6c6-5 14-1 17 10-4-5-9-9-17-10z" fill="#3a2418" />
    <path d="M11 8l8 3-7 8c-2-3-2-8-1-11z" fill="#a8d4ea" opacity=".8" />
  </svg>
);

export default function App() {
  return (
    <Screen>
      <Global />
      <OfficeOrb>
        <svg width="37" height="38" viewBox="0 0 37 38">
          <defs><radialGradient id="ob" cx=".5" cy=".35" r=".65"><stop offset="0" stopColor="#fff" /><stop offset=".65" stopColor="#dfe5ee" /><stop offset="1" stopColor="#8799b2" /></radialGradient></defs>
          <circle cx="18.500" cy="19" r="17.800" fill="url(#ob)" stroke="#60758f" strokeWidth=".8" />
          <g fill="none" strokeWidth="2.800">
            <rect x="8.800" y="9.800" width="8.500" height="8.500" rx="1.500" stroke="#e3591d" />
            <rect x="20.500" y="13.500" width="6" height="5" rx="1" stroke="#4a8fdb" />
            <rect x="10.500" y="22" width="6.500" height="6.500" rx="1.200" stroke="#f5b216" />
            <rect x="20.500" y="22" width="7" height="7" rx="1.200" stroke="#6bac2e" />
          </g>
          <path d="M15 17l3 3M19 17l-2 4M21 23l-2-2" stroke="#fff" strokeWidth="1.500" />
        </svg>
      </OfficeOrb>

      <TitleBar>
        <QuickAccess>
          <QuickItem $w={23}>
            <svg width="14" height="14" viewBox="0 0 14 14">
              <path d="M.5.500h12l1 1v12H.5z" fill="#4a55b8" stroke="#2c3590" />
              <rect x="3" y="1" width="8" height="6" fill="#f4f7fd" /><rect x="3" y="9" width="8" height="5" fill="#dfe4ee" /><rect x="4" y="10" width="2.500" height="3" fill="#2c3590" />
            </svg>
          </QuickItem>
          <QuickItem $w={17}>
            <svg width="14" height="13" viewBox="0 0 14 13">
              <path d="M0 1v7h7L4.800 5.700C8 3.500 10.500 6 8 11l1 1.500c4-4 4.500-10-1-11C5.500 1 3.500 2 2.300 3.300z" fill="#3f74cc" stroke="#2d58a8" strokeWidth=".4" />
            </svg>
          </QuickItem>
          <QuickItem $w={14}><Caret $color="#3f6fb8" /></QuickItem>
          <QuickItem $w={17}>
            <svg width="14" height="13" viewBox="0 0 14 13">
              <path d="M13 1v7H6l2.200-2.300C5 3.500 3 6 5 11l-1 1.500c-4-4-4-10 1-11C8 1 9.500 2 10.700 3.300z" fill="#93a5bb" opacity=".75" />
            </svg>
          </QuickItem>
          <QuickItem $w={12}><Caret $color="#dbe4ee" /></QuickItem>
        </QuickAccess>
        <Customize>
          <svg width="8" height="8" viewBox="0 0 8 8"><path d="M1 1h6v1.500H1z" fill="#fff" /><path d="M1 0h6v1H1zM1 3h6L4 7z" fill="#25406e" /></svg>
        </Customize>
        <WindowTitle>web GC  update - Microsoft Excel</WindowTitle>
        <ChartTools>Chart Tools</ChartTools>
        <WindowButtons>
          <WindowButton $w={28}><svg width="13" height="6"><rect x=".5" y=".5" width="11" height="4" rx="1" fill="#fff" stroke="#44566b" /></svg></WindowButton>
          <WindowButton $w={27}>
            <svg width="13" height="13" viewBox="0 0 13 13"><rect x="3.500" y=".5" width="8.500" height="8.500" fill="#fff" stroke="#44566b" /><rect x=".5" y="2.500" width="9" height="9.500" fill="#fff" stroke="#44566b" /><rect x="3.500" y="5.500" width="3" height="3" fill="#7b93aa" stroke="#44566b" /></svg>
          </WindowButton>
          <WindowButton $w={47} $close>
            <svg width="12" height="11" viewBox="0 0 12 11"><path d="M1 1h3l2 2.500L8 1h3L7.800 5.500 11 10H8L6 7.500 4 10H1l3.200-4.500z" fill="#fff" stroke="#4c3238" strokeWidth=".9" /></svg>
          </WindowButton>
        </WindowButtons>
      </TitleBar>

      <TabStrip>
        <Tab $w={64}>Home</Tab>
        <Tab $w={52} $active>Insert</Tab>
        <Tab $w={98}>Page Layout</Tab>
        <Tab $w={67}>Formulas</Tab>
        <Tab $w={64}>Data</Tab>
        <Tab $w={54}>Review</Tab>
        <Tab $w={62}>View</Tab>
        <ContextTabs>
          <Tab $w={62}>Design</Tab>
          <Tab $w={66}>Layout</Tab>
          <Tab $w={62}>Format</Tab>
        </ContextTabs>
        <TabTools>
          <ToolSlot $w={23}>
            <svg width="14" height="14" viewBox="0 0 14 14"><circle cx="7" cy="7" r="6.300" fill="#fff" stroke="#3c63b8" /><circle cx="7" cy="7" r="4.900" fill="#2158d2" /><text x="7" y="10.500" textAnchor="middle" fontFamily="Open Sans" fontWeight="700" fontSize="9.500" fill="#fff">?</text></svg>
          </ToolSlot>
          <ToolSlot $w={21}><svg width="10" height="9"><rect x="1" y="6" width="7" height="2" fill="#6b7683" /></svg></ToolSlot>
          <ToolSlot $w={24}><svg width="10" height="8" viewBox="0 0 10 8"><path d="M2.500 2V.5h7v5H8M.5 2.500h7v4.500h-7zM1 3h6" fill="none" stroke="#6b7683" /><path d="M2 0h8v1.500H2zM0 2h8v1.200H0z" fill="#6b7683" /></svg></ToolSlot>
          <ToolSlot $w={12}><svg width="9" height="8" viewBox="0 0 9 8"><path d="M1 0l7 8M8 0L1 8" stroke="#75808c" strokeWidth="2" /></svg></ToolSlot>
        </TabTools>
      </TabStrip>

      <Ribbon>
        {groups.map((g) => (
          <Group key={g.name} $w={g.w} $pad={g.pad}>
            <GroupBody>
              {g.items.map((b) => <RibbonButton key={b.lines[0]} b={b} />)}
            </GroupBody>
            <GroupLabel>
              {g.name}
              {g.launcher && (
                <Launcher>
                  <svg width="8" height="8" viewBox="0 0 8 8"><path d="M.5 6V.5H6" fill="none" stroke="#6384b0" /><path d="M3 3l3.500 3.500M7 3.500V7H3.500" fill="none" stroke="#6384b0" strokeWidth="1.300" /></svg>
                </Launcher>
              )}
            </GroupLabel>
          </Group>
        ))}
      </Ribbon>
      <RibbonEdge />

      <FormulaBar>
        <NameBox>
          <NameText>Chart 2</NameText>
          <svg width="7" height="4"><path d="M0 0h7L3.500 4z" fill="#000" /></svg>
        </NameBox>
        <FxArea>
          <Knob />
          <Fx>f<FxSmall>x</FxSmall></Fx>
        </FxArea>
        <Expand>
          <svg width="7" height="8" viewBox="0 0 7 8"><path d="M.5.500l3 2.500 3-2.500M.5 4.500l3 2.500 3-2.500" fill="none" stroke="#000" strokeWidth="1.500" /></svg>
        </Expand>
      </FormulaBar>
      <FormulaGap />

      <SheetArea>
        <Sheet>
          <HeaderRow>
            <SelectAll><svg width="18" height="19"><path d="M18 0v19H0z" fill="#e4e9f1" /></svg></SelectAll>
            {columns.map(([c, w]) => <ColHead key={c} $w={w}>{c}</ColHead>)}
          </HeaderRow>
          <GridWindow>
            {rows.map((r) => (
              <Row key={r.n} $h={r.h} $pb={rowPad(r.h)}>
                <RowHead>{r.n}</RowHead>
                {columns.map(([c, w]) => (
                  <Cell key={c} $w={w} $num={c === "B"}>
                    {c === "A" && r.a && <HindiText $w={r.aw!} $size={r.size}>{r.a}</HindiText>}
                    {c === "B" && r.b}
                  </Cell>
                ))}
              </Row>
            ))}
            <TopChart />
            <SelectedChart />
            <BottomChart />
          </GridWindow>
          <Range $x={41} $w={437} $c="#9a00c8" $open>
            {corners.map((p) => <Handle key={p} $c="#9a00c8" $pos={p} />)}
          </Range>
          <Range $x={477} $w={94} $c="#1414f0">
            {corners.map((p) => <Handle key={p} $c="#1414f0" $pos={p} />)}
          </Range>
        </Sheet>
        <VScroll>
          <VSplit />
          <VArrowTop><Arrow $d="up" /></VArrowTop>
          <VThumb><VGrip /></VThumb>
          <VArrowBottom><Arrow $d="down" /></VArrowBottom>
        </VScroll>
      </SheetArea>

      <BottomBar>
        <NavButtons>
          <svg width="7" height="7"><path d="M0 0h1.500v7H0zM7 0v7L2.500 3.500z" fill="#15428b" /></svg>
          <svg width="6" height="7"><path d="M5 0v7L0 3.500z" fill="#15428b" /></svg>
          <svg width="6" height="7"><path d="M1 0v7l5-3.500z" fill="#15428b" /></svg>
          <svg width="7" height="7"><path d="M0 0v7l4.500-3.500zM5.500 0H7v7H5.500z" fill="#15428b" /></svg>
        </NavButtons>
        <SheetTab $w={60} $active>Sheet1</SheetTab>
        <SheetTab $w={60}>Sheet2</SheetTab>
        <SheetTab $w={60}>Sheet3</SheetTab>
        <SheetTab $w={34}>
          <svg width="14" height="13" viewBox="0 0 14 13"><path d="M4 3h9v8l-2 1H6z" fill="#fff" stroke="#5b7bb0" /><path d="M4 0v8M0 4h8M1 1l6 6M7 1L1 7" stroke="#e89a2c" /></svg>
        </SheetTab>
        <Spacer $w={535} />
        <HSplit />
        <HTrack>
          <Arrow $d="left" />
          <HThumb><HGrip /></HThumb>
          <Arrow $d="right" />
        </HTrack>
        <HSplit />
      </BottomBar>

      <StatusBar>
        <Ready>Ready</Ready>
        <ZoomArea>
          <ViewGroup>
            <ViewButton $on><svg width="13" height="11" viewBox="0 0 13 11"><rect x=".5" y=".5" width="12" height="10" fill="#fff" stroke="#7a6a50" /><path d="M4.500 0v11M8.500 0v11M0 4h13M0 7.500h13" stroke="#7a6a50" /></svg></ViewButton>
            <ViewButton><svg width="13" height="12" viewBox="0 0 13 12"><rect x=".5" y=".5" width="12" height="11" fill="#8c97a8" stroke="#59667a" /><rect x="3" y="2" width="7" height="8" fill="#fff" /><path d="M4 4h5M4 6h5M4 8h5" stroke="#59667a" /></svg></ViewButton>
            <ViewButton><svg width="13" height="12" viewBox="0 0 13 12"><rect x=".5" y=".5" width="12" height="11" fill="#8c97a8" stroke="#59667a" /><path d="M1 1h4v6H1zM6 1h3v6H6z" fill="#fff" /></svg></ViewButton>
          </ViewGroup>
          <ZoomText>145%</ZoomText>
          <svg width="140" height="18" viewBox="0 0 140 18">
            <path d="M17 8.500h103" stroke="#5f82b8" /><path d="M17 9.500h103" stroke="#dfeaf8" />
            {[8.500, 126.500].map((x) => <circle key={x} cx={x} cy="9" r="7.500" fill="#e9eef6" stroke="#5f7391" />)}
            <path d="M4.500 9h8M122.500 9h8M126.500 5v8" stroke="#4b5a72" strokeWidth="2" />
            <path d="M70.500 2.500h8v8l-4 4-4-4z" fill="#dfe9f7" stroke="#5270a0" /><path d="M74.500 5v5" stroke="#5270a0" />
          </svg>
        </ZoomArea>
      </StatusBar>

      <Taskbar>
        <Spacer $w={8} />
        <TaskButton $w={38}><StartOrb /></TaskButton>
        <Spacer $w={13} />
        <TaskButton $w={58}><PlayerIcon /></TaskButton>
        <Spacer $w={4} />
        <TaskButton $w={59} $open><ExplorerIcon /></TaskButton>
        <Spacer $w={3} />
        <TaskButton $w={59}><BallsIcon /></TaskButton>
        <Spacer $w={3} />
        <TaskButton $w={59} $open><ChromeIcon /></TaskButton>
        <Spacer $w={3} />
        <TaskButton $w={59}><NotesIcon /></TaskButton>
        <Spacer $w={3} />
        <TaskButton $w={59} $open><TalkIcon /></TaskButton>
        <Spacer $w={3} />
        <TaskButton $w={59}><IEIcon /></TaskButton>
        <Spacer $w={3} />
        <TaskButton $w={59} $open $bright><ExcelIcon /></TaskButton>
        <Spacer $w={3} />
        <TaskButton $w={59} $open><EyeIcon /></TaskButton>
        <Tray>
          <TraySlot $w={24}><svg width="8" height="4"><path d="M4 0l4 4H0z" fill="#fff" /></svg></TraySlot>
          <TraySlot $w={25}>
            <svg width="16" height="12">{[0, 1, 2, 3, 4].map((i) => <rect key={i} x={i * 3.2} y={9 - i * 2.200} width="2.300" height={3 + i * 2.200} fill="#fff" />)}</svg>
          </TraySlot>
          <TraySlot $w={24}>
            <svg width="16" height="16" viewBox="0 0 16 16"><path d="M4 0l4 2.500L4 5 0 2.500zM12 0l4 2.500L12 5 8 2.500zM4 5l4 2.500L4 10 0 7.500zM12 5l4 2.500-4 2.500-4-2.500zM8 8.500l3.500 2.500L8 13.500 4.500 11z" fill="#6cc0f5" /><circle cx="11.500" cy="11.500" r="4" fill="#3fa53a" /><path d="M9.500 11.500l1.500 1.700 2.500-3.400" fill="none" stroke="#fff" strokeWidth="1.200" /></svg>
          </TraySlot>
          <TraySlot $w={24}><svg width="10" height="15" viewBox="0 0 10 15"><rect x="3" y="0" width="4" height="2" fill="#fff" /><rect x="1" y="2.500" width="8" height="11.500" rx="1" fill="none" stroke="#fff" strokeWidth="1.300" /><rect x="3" y="7" width="4" height="5" fill="#fff" /></svg></TraySlot>
          <TraySlot $w={24}><svg width="16" height="14" viewBox="0 0 16 14"><path d="M1 4.500h3L8 1v12L4 9.500H1z" fill="#fff" /><path d="M10 4.500c1 1.500 1 3.500 0 5M12 3c2 2.500 2 5.500 0 8M14 1.500c2.500 3.500 2.500 7.500 0 11" fill="none" stroke="#dfe8f0" strokeWidth=".9" /></svg></TraySlot>
          <Spacer $w={4} />
          <Clock><div>13:29</div><div>2/4/2013</div></Clock>
          <ShowDesktop />
        </Tray>
      </Taskbar>
    </Screen>
  );
}
